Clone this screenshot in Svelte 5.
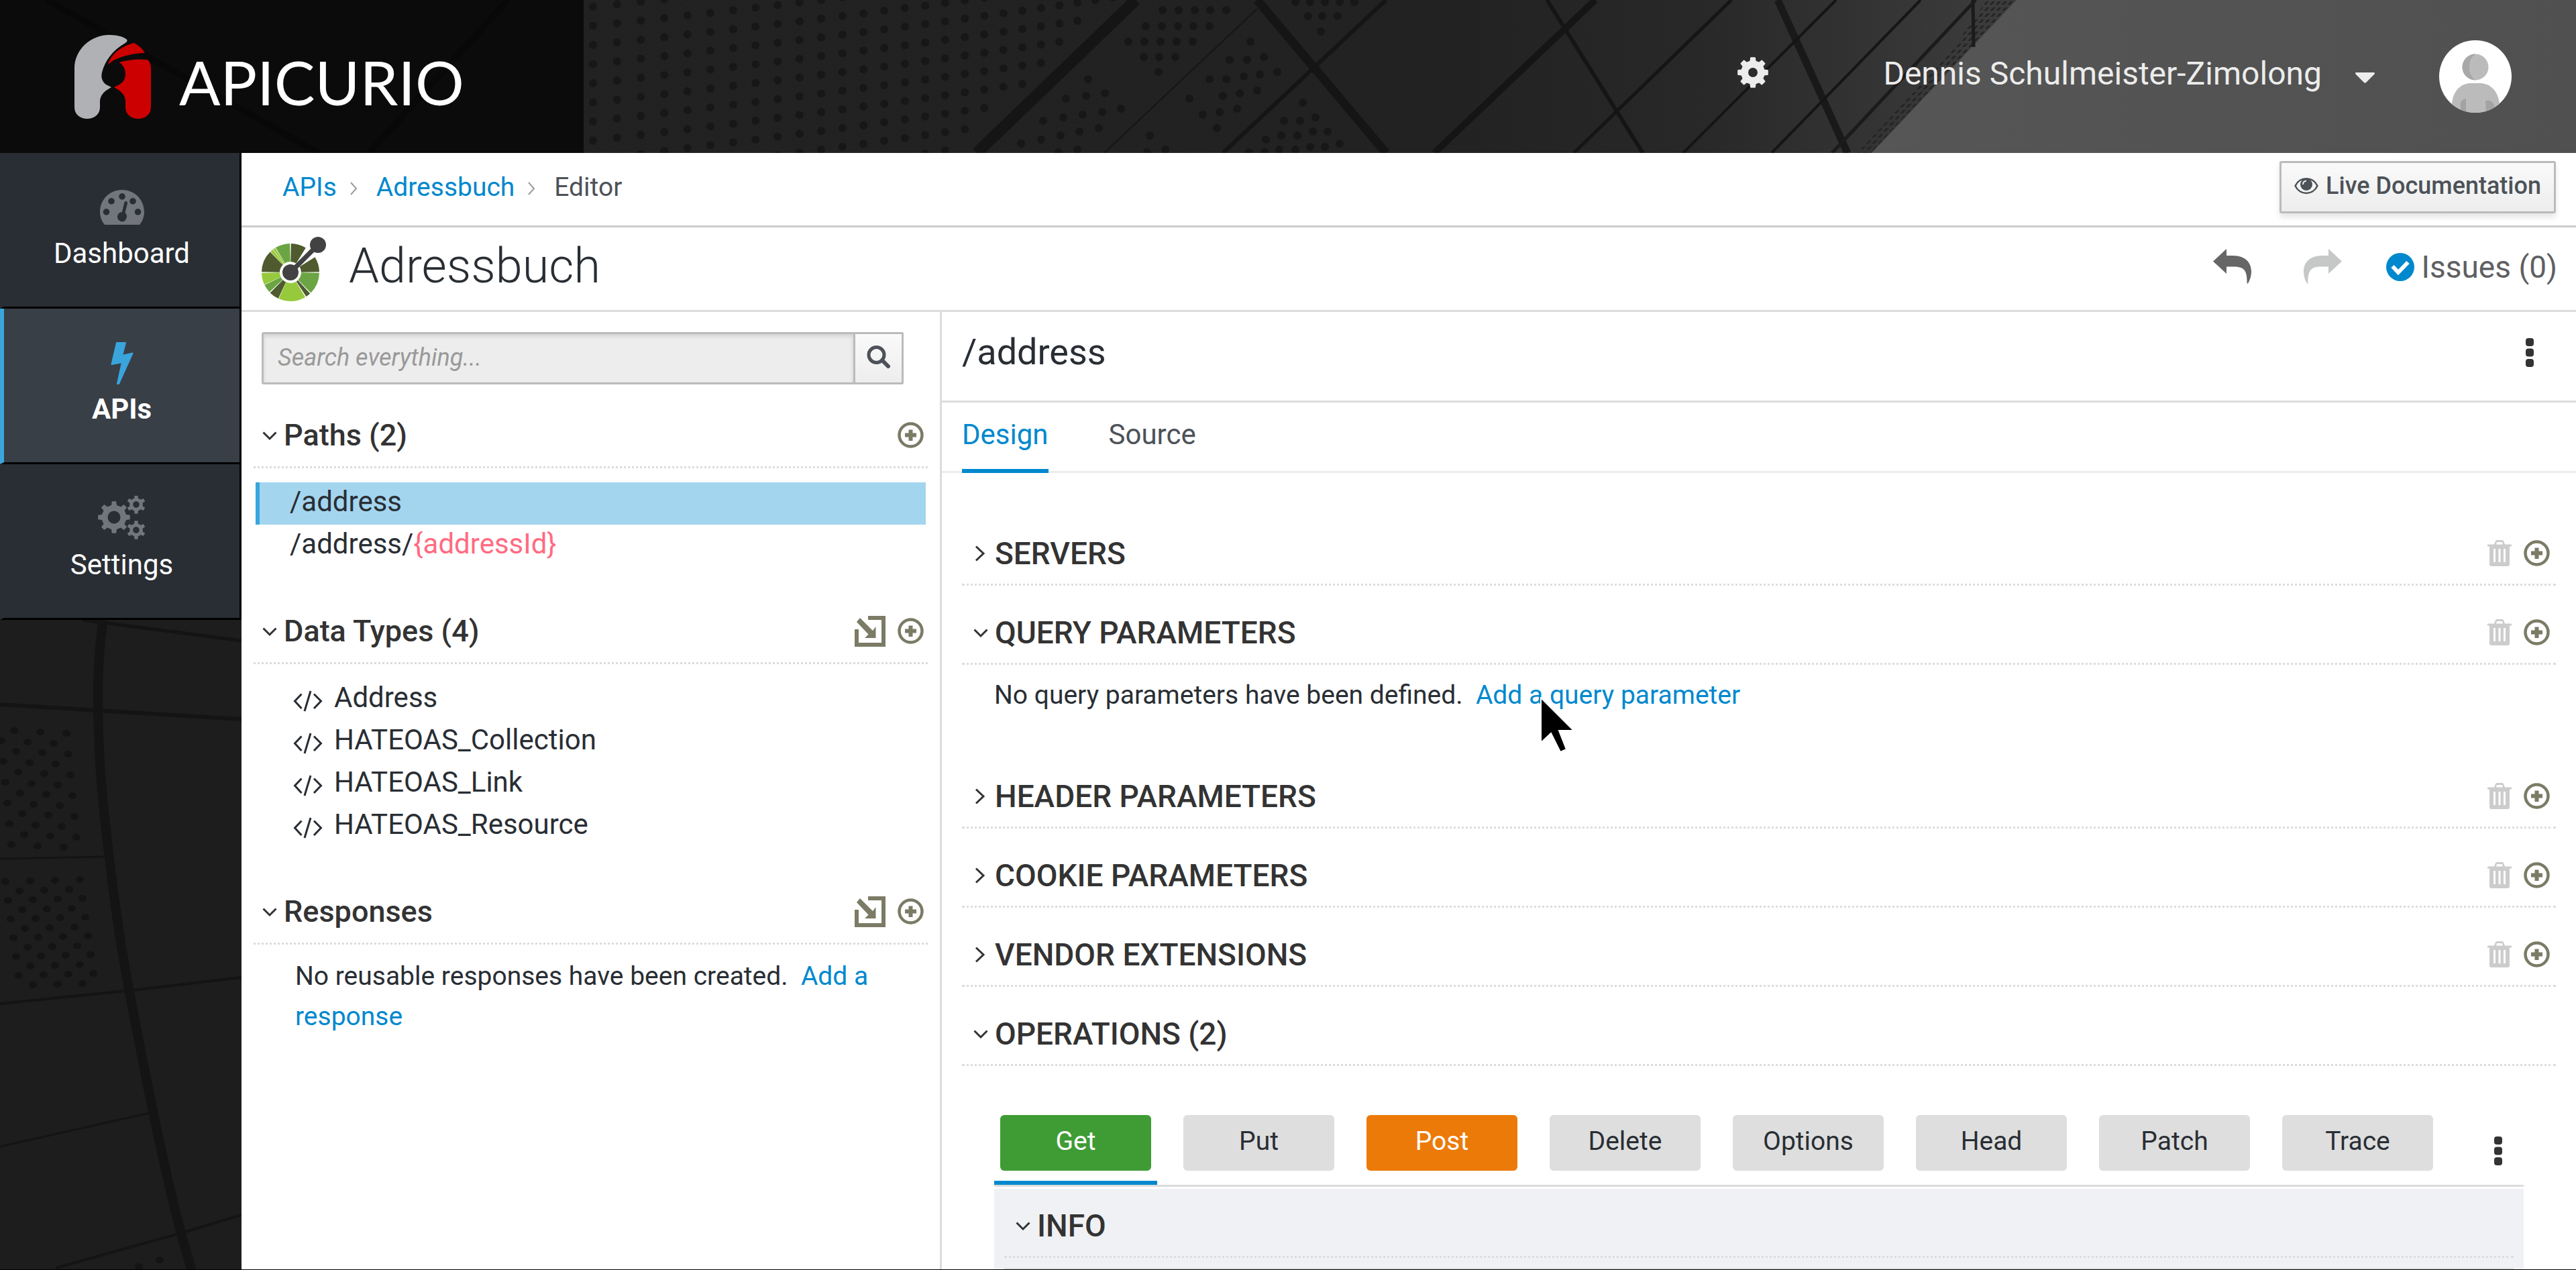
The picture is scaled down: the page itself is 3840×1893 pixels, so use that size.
<script lang="ts">
  type Point = [number, number];

  const nav = [
    { label: 'Dashboard', icon: 'dashboard', active: false },
    { label: 'APIs', icon: 'bolt', active: true },
    { label: 'Settings', icon: 'cogs', active: false },
  ];

  const dataTypes = ['Address', 'HATEOAS_Collection', 'HATEOAS_Link', 'HATEOAS_Resource'];

  const methods = [
    { name: 'Get', tone: 'get' },
    { name: 'Put', tone: '' },
    { name: 'Post', tone: 'post' },
    { name: 'Delete', tone: '' },
    { name: 'Options', tone: '' },
    { name: 'Head', tone: '' },
    { name: 'Patch', tone: '' },
    { name: 'Trace', tone: '' },
  ];

  let search = $state('');
  let tab = $state('Design');
  let method = $state('Get');

  // Outline of a toothed wheel with a round hole, for use with fill-rule evenodd.
  function gear(cx: number, cy: number, teeth: number, outer: number, inner: number, hole: number): string {
    const pts: string[] = [];
    const step = (Math.PI * 2) / teeth;
    for (let i = 0; i < teeth; i++) {
      const a = i * step - Math.PI / 2;
      const corners: Point[] = [
        [a - step * 0.27, inner],
        [a - step * 0.17, outer],
        [a + step * 0.17, outer],
        [a + step * 0.27, inner],
      ];
      for (const [t, r] of corners) pts.push(`${(cx + Math.cos(t) * r).toFixed(1)} ${(cy + Math.sin(t) * r).toFixed(1)}`);
    }
    return `M${pts.join('L')}ZM${cx - hole} ${cy}a${hole} ${hole} 0 1 0 ${hole * 2} 0a${hole} ${hole} 0 1 0 ${-hole * 2} 0Z`;
  }

  // Slice of the ring in the API logo; angles are in degrees, counter-clockwise from the right.
  function wedge(from: number, to: number): string {
    const at = (deg: number, r: number) => {
      const t = (deg * Math.PI) / 180;
      return `${(43 + Math.cos(t) * r).toFixed(1)} ${(53 - Math.sin(t) * r).toFixed(1)}`;
    };
    return `M${at(from, 16)}L${at(from, 43)}A43 43 0 0 0 ${at(to, 43)}L${at(to, 16)}A16 16 0 0 1 ${at(from, 16)}Z`;
  }

  const slices: [number, number, string][] = [
    [1, 32, '#4f5b2f'],
    [58, 89, '#4f5b2f'],
    [91, 121, '#6ba543'],
    [122, 127, '#97c93d'],
    [128, 134, '#97c93d'],
    [135, 179, '#4f5b2f'],
    [181, 205, '#97c93d'],
    [206, 223, '#6ba543'],
    [225, 245, '#4f5b2f'],
    [246, 301, '#97c93d'],
    [303, 313, '#4f5b2f'],
    [315, 359, '#6ba543'],
  ];

  // Perforated facade in the masthead.
  const facadeDots: Point[] = [];
  for (let i = 0; i < 26; i++) {
    for (let j = 0; j < 12; j++) {
      const x = 884 + 36 * i - 0.2 * i * i;
      const y = 10 + (28.5 - i * 0.06) * j - 3.8 * i;
      if (y > -6 && y < 234 && x < 1655 - 1.04 * y) facadeDots.push([x, y]);
    }
  }
  const patches: [number, number[]][] = [
    [3, [1931, 1953, 1975, 1997, 2019]],
    [15, [1733, 1757, 1781, 1804, 1828]],
    [24, [1950, 1971, 1994]],
    [39, [1708, 1732, 1756, 1779, 1803]],
    [47, [1969]],
    [62, [1682, 1706, 1730, 1754, 1778, 1864]],
    [85, [1705, 1728, 1752, 1884]],
    [89, [1833, 1859]],
    [107, [1727, 1904]],
    [111, [1878]],
    [114, [1854]],
    [118, [1622, 1803, 1828]],
    [135, [1874]],
    [139, [1647, 1848]],
    [143, [1619, 1823]],
    [147, [1589, 1773]],
    [153, [1942]],
    [162, [1671, 1844]],
    [167, [1643, 1818]],
    [171, [1614, 1793]],
    [175, [1585, 1961]],
    [180, [1555, 1914, 1938]],
    [191, [1638, 1814]],
    [196, [1609, 1957, 1979]],
    [202, [1581, 1714, 1910, 1934]],
    [208, [1552, 1887]],
    [214, [1522, 1997]],
    [219, [1953, 1975]],
    [223, [1606, 1737, 1907, 1931]],
    [227, [1578, 1710, 1862, 1885]],
  ];
  for (const [y, xs] of patches) for (const x of xs) facadeDots.push([x, y]);

  // Perforated panels at the foot of the navigation.
  const wallDots: Point[] = [];
  for (let k = 0; k < 6; k++) {
    for (let c = 0; c < 3; c++) {
      wallDots.push([21 + c * 39 + k * 3, 165 + c * 2 + k * 31]);
      wallDots.push([2 + c * 39 + k * 3, 180 + c * 2 + k * 31]);
    }
    for (let c = 0; c < 4; c++) {
      wallDots.push([8 + c * 37 + k * 4, 390 - c + k * 28]);
      if (c < 3) wallDots.push([29 + c * 37 + k * 4, 404 - c + k * 28]);
    }
  }
  wallDots.push([238, 954], [207, 964]);
</script>

{#snippet chevron(open: boolean)}
  <svg class="chevron" viewBox="0 0 22 24" aria-hidden="true">
    {#if open}
      <path d="M1.500 7.500L11 17L20.500 7.500" />
    {:else}
      <path d="M4 1.500L15 12L4 22.500" />
    {/if}
  </svg>
{/snippet}

{#snippet plus()}
  <button class="tool" aria-label="Add">
    <svg width="39" height="39" viewBox="0 0 39 39" fill="#7b7b66" aria-hidden="true">
      <circle cx="19.500" cy="19.500" r="17" fill="none" stroke="#7b7b66" stroke-width="4.500" />
      <path d="M16.500 11.500h6v5h5.500v6h-5.500v5.500h-6v-5.500h-5.500v-6h5.500z" />
    </svg>
  </button>
{/snippet}

{#snippet importer()}
  <button class="tool" aria-label="Import">
    <svg width="46" height="46" viewBox="0 0 46 46" fill="#7b7b66" aria-hidden="true">
      <path d="M20 0h26v46H0V20h6v20h34V6H20z" />
      <path d="M8 3L27 22L31.500 16V33H15L20.500 27.500L3 9z" />
    </svg>
  </button>
{/snippet}

{#snippet trash()}
  <button class="tool" aria-label="Delete all">
    <svg width="36" height="39" viewBox="0 0 36 39" aria-hidden="true">
      <path
        fill="#ccc"
        fill-rule="evenodd"
        d="M12 1.500Q12.500 0 14 0h8q1.500 0 2 1.500L26 6.500h9q1 0 1 1V9.500h-3V36q0 3-3 3H6q-3 0-3-3V9.500H0V7.500q0-1 1-1h9zM13 6.500h10l-1-3.500h-8zM9 13v20h3V13zM16.500 13v20h3V13zM24 13v20h3V13z"
      />
    </svg>
  </button>
{/snippet}

{#snippet kebab()}
  <svg width="12" height="43" viewBox="0 0 12 43" fill="#333" aria-hidden="true">
    <rect width="12" height="12" rx="4" />
    <rect y="15.500" width="12" height="12" rx="4" />
    <rect y="31" width="12" height="12" rx="4" />
  </svg>
{/snippet}

{#snippet sectionHead(title: string, open: boolean, tools: boolean)}
  <div class="head">
    <h3><button class="toggle" aria-expanded={open}>{@render chevron(open)}{title}</button></h3>
    {#if tools}
      <div class="tools">{@render trash()}{@render plus()}</div>
    {/if}
  </div>
{/snippet}

<div class="app">
  <header class="masthead">
    <svg class="backdrop" viewBox="0 0 3840 228" preserveAspectRatio="xMaxYMid slice" aria-hidden="true">
      <defs>
        <linearGradient id="facade" x1="0" x2="1" y1="0" y2="0">
          <stop offset="0" stop-color="#212121" />
          <stop offset="0.56" stop-color="#222" />
          <stop offset="0.66" stop-color="#282828" />
          <stop offset="0.77" stop-color="#3b3b3b" />
        </linearGradient>
        <linearGradient id="sky" x1="0" x2="1" y1="0" y2="0">
          <stop offset="0" stop-color="#565656" />
          <stop offset="1" stop-color="#505050" />
        </linearGradient>
        <pattern id="mesh" width="9" height="9" patternUnits="userSpaceOnUse" patternTransform="skewX(-43)">
          <rect x="2" y="2" width="4" height="5" fill="#252525" />
        </pattern>
      </defs>
      <rect width="3840" height="228" fill="url(#facade)" />
      <g fill="#171717">
        {#each facadeDots as [x, y]}
          <ellipse cx={x} cy={y} rx="6" ry="6" />
        {/each}
      </g>
      <path d="M3006 0H3840V228H2790Z" fill="url(#sky)" />
      <path d="M2962 0H3004L2788 228H2766L2920 60Z" fill="url(#mesh)" />
      <g fill="none" stroke="#151515">
        <path stroke-width="17" d="M1693 0L1456 228" />
        <path stroke-width="13" d="M1874 0L2066 228" />
        <path stroke-width="6" d="M2066 0L1823 228" />
        <path stroke-width="2" d="M1874 13L1646 228" />
        <path stroke-width="10" d="M2378 0L2138 228" />
        <path stroke-width="6" d="M2306 0L2449 228" />
        <path stroke-width="5" d="M2581 0L2346 228" />
        <path stroke-width="11" d="M2650 0L2754 228" stroke="#191919" />
        <path stroke-width="4" d="M2737 0L2509 228" />
        <path stroke-width="4" d="M2863 0L2641 228" />
        <path stroke-width="5" d="M2945 0L2731 228M2941 0L2942 70" stroke="#1b1b1b" />
      </g>
      <rect width="870" height="228" fill="#0b0b0b" />
      <path stroke="#080808" stroke-width="9" fill="none" d="M70 0L475 228M757 0L550 228" />
    </svg>
    <div class="bar">
      <a class="brand" href="#home">
        <svg width="114" height="125" viewBox="0 0 114 125" aria-hidden="true">
          <path
            fill="#afb1b4"
            d="M0 50C0 22 24 0 52 0C64 0 74 3 78 7Q80 9 76 12C56 23 45 40 41 56C39 64 42 70 47 74L55 78L47 83Q39 89 38 98V108C38 118 30 125 19 125C8 125 0 118 0 108Z"
          />
          <path fill="#c00" d="M50 44C54 30 68 17 89 12Q100 18 105 27C86 27 68 33 58 38Z" />
          <path
            fill="#c00"
            d="M67 41Q86 35 109 37Q114 41 114 50V108C114 118 106 125 95 125C84 125 76 118 76 108V98Q75 89 67 83L59 78L67 74Q76 69 76 58Q76 48 67 41Z"
          />
        </svg>
        <span>APICURIO</span>
      </a>
      <button class="cog" aria-label="Configuration">
        <svg width="48" height="48" viewBox="0 0 48 48" aria-hidden="true">
          <path fill="#ececec" stroke="#ececec" stroke-width="2" stroke-linejoin="round" fill-rule="evenodd" d={gear(24, 24, 8, 22, 17, 8)} />
        </svg>
      </button>
      <button class="user">
        Dennis Schulmeister-Zimolong
        <svg width="29" height="16" viewBox="0 0 29 16" aria-hidden="true"><path d="M1 0H28Q30 1 28 3L16 15Q14.500 16.500 13 15L1 3Q-1 1 1 0Z" fill="#ececec" /></svg>
      </button>
      <svg class="avatar" width="108" height="108" viewBox="0 0 108 108" role="img" aria-label="Dennis Schulmeister-Zimolong">
        <defs><clipPath id="face"><circle cx="54" cy="54" r="54" /></clipPath></defs>
        <circle cx="54" cy="54" r="54" fill="#fff" />
        <g clip-path="url(#face)">
          <ellipse cx="54" cy="40" rx="19.500" ry="19.500" fill="#bbb" />
          <path d="M54 20.500A19.500 19.500 0 0 0 54 59.500Q44 52 45 38Q46 26 54 20.500Z" fill="#a8a8a8" />
          <path d="M19 108V94C21 74 33 65 46 64H62C76 65 87 74 90 94V108Z" fill="#bbb" />
          <path d="M32 108V92Q36 87 40 87V108ZM70 108L69 90Q77 88 82 96V108Z" fill="#a3a3a3" />
        </g>
      </svg>
    </div>
  </header>

  <div class="body">
    <nav class="side" aria-label="Main">
      {#each nav as item}
        <a class="nav-item" class:active={item.active} href="#{item.label}" aria-current={item.active ? 'page' : undefined}>
          <svg width="72" height="68" viewBox="0 0 72 68" aria-hidden="true">
            {#if item.icon === 'dashboard'}
              <path
                fill="#72767b"
                fill-rule="evenodd"
                d="M10 60Q3 52 3 41C3 23 17 8 36 8S69 23 69 41Q69 52 62 60H10ZM36 13a4.800 4.800 0 1 0 .1 0ZM20 20a4.800 4.800 0 1 0 .1 0ZM52 20a4.800 4.800 0 1 0 .1 0ZM12.500 36a4.800 4.800 0 1 0 .1 0ZM59.500 36a4.800 4.800 0 1 0 .1 0ZM39.500 26.500Q40.500 24.500 42.500 25.200T44 28L40.500 42Q44 45 42.500 50T36 55.500Q29 54 29 48T36 41Z"
              />
            {:else if item.icon === 'bolt'}
              <path fill="#39a5dc" stroke="#39a5dc" stroke-width="2" stroke-linejoin="round" d="M28 4H41L36 23L51.500 19.500L31 65H29L36 33L20.500 36Z" />
            {:else}
              <g fill="#72767b" fill-rule="evenodd">
                <path d={gear(24, 32, 8, 24, 18.5, 9.5)} />
                <path d={gear(57, 13, 6, 14, 10, 4.8)} />
                <path d={gear(57, 51, 6, 14, 10, 4.8)} />
              </g>
            {/if}
          </svg>
          <span>{item.label}</span>
        </a>
      {/each}
      <svg class="wall" viewBox="0 0 360 969" preserveAspectRatio="xMinYMin slice" aria-hidden="true">
        <rect width="360" height="969" fill="#1d1d1d" />
        <g fill="#141414">
          {#each wallDots as [x, y]}
            <ellipse cx={x} cy={y} rx="6" ry="5" />
          {/each}
        </g>
        <g fill="none" stroke="#141414">
          <path stroke-width="14" d="M154 0C144 60 145 140 149 212S172 440 187 522S250 860 286 969" />
          <path stroke-width="5" d="M123 0L360 31" />
          <path stroke-width="6" d="M0 126L147 135L360 148" />
          <path stroke-width="3" d="M0 356L155 353" />
          <path stroke-width="4" d="M0 572L197 552L360 533" />
          <path stroke-width="3" d="M0 785L222 735" />
          <path stroke-width="4" d="M83 966L273 913L360 887" />
        </g>
      </svg>
    </nav>

    <main class="content">
      <div class="crumb-row">
        <nav class="crumbs" aria-label="Breadcrumb">
          <a href="#apis">APIs</a>
          <svg width="12" height="20" viewBox="0 0 12 20" aria-hidden="true"><path d="M2 1L10 10L2 19" fill="none" stroke="#9c9c9c" stroke-width="2" /></svg>
          <a href="#adressbuch">Adressbuch</a>
          <svg width="12" height="20" viewBox="0 0 12 20" aria-hidden="true"><path d="M2 1L10 10L2 19" fill="none" stroke="#9c9c9c" stroke-width="2" /></svg>
          <span>Editor</span>
        </nav>
        <button class="live">
          <svg width="36" height="26" viewBox="0 0 36 26" aria-hidden="true">
            <path fill="none" stroke="#4d5258" stroke-width="2.500" d="M1.500 13C8-1.500 28-1.500 34.500 13C28 27.500 8 27.500 1.500 13Z" />
            <circle cx="18" cy="11" r="9" fill="#4d5258" />
            <path d="M13 11Q13 6 18 5.500" fill="none" stroke="#eee" stroke-width="2" />
          </svg>
          Live Documentation
        </button>
      </div>

      <div class="title-row">
        <svg class="api-logo" width="96" height="96" viewBox="0 0 96 96" aria-hidden="true">
          {#each slices as [from, to, color]}
            <path d={wedge(from, to)} fill={color} />
          {/each}
          <g fill="#424242">
            <circle cx="43" cy="53" r="12" />
            <circle cx="84" cy="12" r="12" />
            <path d="M43 53L84 12" stroke="#424242" stroke-width="7" />
          </g>
        </svg>
        <h1>Adressbuch</h1>
        <div class="actions">
          <button class="undo" aria-label="Undo">
            <svg width="57" height="52" viewBox="0 0 57 52" aria-hidden="true"><path fill="#666" d="M0 18.500L20 0V10H29C50 10 57 22 57 34Q57 43 52 51.500H50.500C51 33 47 26.500 31 26.500H20V37Z" /></svg>
          </button>
          <button class="redo" aria-label="Redo">
            <svg width="57" height="52" viewBox="0 0 57 52" aria-hidden="true"><path fill="#c6c8c8" d="M57 18.500L37 0V10H28C7 10 0 22 0 34Q0 43 5 51.500H6.500C6 33 10 26.500 26 26.500H37V37Z" /></svg>
          </button>
          <button class="issues">
            <svg width="42" height="42" viewBox="0 0 42 42" aria-hidden="true"><circle cx="21" cy="21" r="21" fill="#0088ce" /><path d="M9.500 20L18 29L32.500 14" fill="none" stroke="#fff" stroke-width="6" /></svg>
            Issues (0)
          </button>
        </div>
      </div>

      <div class="panes">
        <aside class="outline">
          <form class="search" role="search">
            <input type="text" aria-label="Search everything" placeholder="Search everything..." bind:value={search} />
            <button type="button" aria-label="Search">
              <svg width="36" height="34" viewBox="0 0 36 34" fill="none" stroke="#4d5258" aria-hidden="true">
                <circle cx="14.500" cy="14" r="11.500" stroke-width="5" />
                <path d="M23 22L32 31" stroke-width="6" stroke-linecap="round" />
              </svg>
            </button>
          </form>

          <section>
            <div class="head">
              <h2><button class="toggle" aria-expanded="true">{@render chevron(true)}Paths (2)</button></h2>
              <div class="tools">{@render plus()}</div>
            </div>
            <ul>
              <li><a class="row selected" href="#address">/address</a></li>
              <li><a class="row" href="#addressId">/address/<span class="param">{'{addressId}'}</span></a></li>
            </ul>
          </section>

          <section>
            <div class="head">
              <h2><button class="toggle" aria-expanded="true">{@render chevron(true)}Data Types (4)</button></h2>
              <div class="tools">{@render importer()}{@render plus()}</div>
            </div>
            <ul>
              {#each dataTypes as name}
                <li>
                  <a class="row typed" href="#{name}">
                    <svg width="44" height="32" viewBox="0 0 44 32" fill="none" stroke="#292e34" stroke-width="3" aria-hidden="true">
                      <path d="M12.500 5.500L2.500 16L12.500 27M31 5.500L41.500 16L31 27M26 1L17 31" />
                    </svg>
                    {name}
                  </a>
                </li>
              {/each}
            </ul>
          </section>

          <section>
            <div class="head">
              <h2><button class="toggle" aria-expanded="true">{@render chevron(true)}Responses</button></h2>
              <div class="tools">{@render importer()}{@render plus()}</div>
            </div>
            <p class="empty">No reusable responses have been created. &nbsp;<a href="#add-response">Add a response</a></p>
          </section>
        </aside>

        <section class="editor">
          <div class="path-bar">
            <h2>/address</h2>
            <button class="menu" aria-label="Path actions">{@render kebab()}</button>
          </div>

          <div class="tabs" role="tablist">
            {#each ['Design', 'Source'] as name}
              <button role="tab" aria-selected={tab === name} class:current={tab === name} onclick={() => (tab = name)}>{name}</button>
            {/each}
          </div>

          <div class="sections">
            <section>{@render sectionHead('SERVERS', false, true)}</section>
            <section>
              {@render sectionHead('QUERY PARAMETERS', true, true)}
              <p class="none">
                No query parameters have been defined. &nbsp;<a class="add" href="#add-query"
                  >Add a query parameter<svg class="pointer" width="54" height="84" viewBox="0 0 54 84" aria-hidden="true">
                    <path d="M2 1V68L17 54L31 82L40 78L29 50H51Z" stroke="#fff" stroke-width="2" />
                  </svg></a
                >
              </p>
            </section>
            <section>{@render sectionHead('HEADER PARAMETERS', false, true)}</section>
            <section>{@render sectionHead('COOKIE PARAMETERS', false, true)}</section>
            <section>{@render sectionHead('VENDOR EXTENSIONS', false, true)}</section>
            <section>
              {@render sectionHead('OPERATIONS (2)', true, false)}
              <div class="operations">
                <div class="methods" role="tablist">
                  {#each methods as m}
                    <div class="method" class:current={method === m.name}>
                      <button role="tab" aria-selected={method === m.name} class={m.tone} onclick={() => (method = m.name)}>{m.name}</button>
                    </div>
                  {/each}
                  <button class="menu" aria-label="Operation actions">{@render kebab()}</button>
                </div>
                <div class="operation">
                  <section>{@render sectionHead('INFO', true, false)}</section>
                  <div class="details"></div>
                </div>
              </div>
            </section>
          </div>
        </section>
      </div>
    </main>
  </div>
</div>

<style>
  :global(body) {
    margin: 0;
    background: #fff;
  }

  .app {
    display: flex;
    flex-direction: column;
    height: 100vh;
    box-sizing: border-box;
    border-bottom: 1px solid #000;
    overflow: hidden;
    font-family: Roboto, 'Noto Sans', sans-serif;
    font-size: 39px;
    line-height: 60px;
    color: #292e34;
  }

  .app :global(*) {
    box-sizing: border-box;
  }

  button {
    font: inherit;
    color: inherit;
    background: none;
    border: 0;
    padding: 0;
    cursor: pointer;
  }

  a {
    color: #0088ce;
    text-decoration: none;
  }

  svg {
    display: block;
    flex: none;
  }

  h1,
  h2,
  h3,
  p,
  ul {
    margin: 0;
    padding: 0;
    font-weight: 400;
  }

  ul {
    list-style: none;
  }

  .masthead {
    display: grid;
    flex: none;
    height: 228px;
    background: #222;
  }

  .masthead > * {
    grid-area: 1 / 1;
    min-width: 0;
  }

  .backdrop {
    width: 100%;
    height: 228px;
  }

  .bar {
    display: flex;
    align-items: center;
    padding: 0 96px 0 111px;
    color: #ececec;
    z-index: 1;
  }

  .brand {
    display: flex;
    align-items: center;
    gap: 42px;
    margin-right: auto;
    color: #fff;
    font-family: Lato, sans-serif;
    font-size: 91px;
    line-height: 120px;
  }

  .brand span {
    padding-top: 16px;
  }

  .cog {
    margin: 0 170px 12px 0;
  }

  .user {
    display: flex;
    align-items: center;
    gap: 50px;
    margin: 0 96px 8px 0;
    font-size: 48px;
  }

  .user svg {
    margin-top: 12px;
  }

  .body {
    display: flex;
    flex: 1;
    min-height: 0;
  }

  .side {
    display: flex;
    flex: none;
    flex-direction: column;
    width: 360px;
    background: #1d1d1d;
  }

  .nav-item {
    display: flex;
    flex: none;
    flex-direction: column;
    align-items: center;
    height: 232px;
    padding-top: 47px;
    background: #292e34;
    border: 3px solid #000;
    border-top: 0;
    border-left: 6px solid #292e34;
    color: #fff;
    font-size: 42px;
    line-height: 70px;
  }

  .nav-item.active {
    background: #393f47;
    border-left-color: #39a5dc;
    font-weight: 700;
  }

  .wall {
    flex: 1;
    width: 100%;
    min-height: 0;
  }

  .content {
    display: flex;
    flex: 1;
    flex-direction: column;
    min-width: 0;
    background: #fff;
  }

  .crumb-row {
    display: flex;
    flex: none;
    align-items: center;
    justify-content: space-between;
    height: 111px;
    padding: 0 30px 6px 61px;
    border-bottom: 3px solid #ccc;
  }

  .crumbs {
    display: flex;
    align-items: center;
    color: #4d5258;
  }

  .crumbs svg {
    margin: 4px 28px 0 19px;
  }

  .live {
    display: flex;
    align-items: center;
    gap: 11px;
    height: 78px;
    padding: 0 19px 4px;
    background: linear-gradient(#fafafa, #ededed);
    border: 3px solid #bbb;
    border-radius: 3px;
    box-shadow: 0 6px 9px rgba(3, 3, 3, 0.1);
    color: #4d5258;
    font-size: 36px;
    font-weight: 500;
  }

  .title-row {
    display: flex;
    flex: none;
    align-items: center;
    height: 126px;
    padding: 0 28px 0 30px;
    border-bottom: 3px solid #dcdcdc;
  }

  h1 {
    padding: 0 0 8px 34px;
    font-size: 72px;
    font-weight: 300;
    line-height: 90px;
  }

  .actions {
    display: flex;
    align-items: center;
    margin: 0 0 6px auto;
  }

  .undo,
  .redo {
    padding-bottom: 2px;
  }

  .redo {
    margin: 0 66px 0 78px;
  }

  .issues {
    display: flex;
    align-items: center;
    gap: 10px;
    color: #5e6063;
    font-size: 46px;
  }

  .panes {
    display: flex;
    flex: 1;
    min-height: 0;
  }

  .outline {
    flex: none;
    width: 30%;
    padding: 30px 18px 0;
    border-right: 3px solid #dcdcdc;
    overflow: hidden;
  }

  .search {
    display: flex;
    height: 78px;
    margin: 0 36px 35px 12px;
  }

  .search input {
    flex: 1;
    min-width: 0;
    padding: 0 21px 2px;
    background: #ededed;
    border: 3px solid #bbb;
    border-radius: 3px 0 0 3px;
    box-shadow: inset 0 3px 6px rgba(3, 3, 3, 0.12);
    font: 36px Roboto, sans-serif;
    color: #292e34;
  }

  .search input::placeholder {
    color: #999;
    font-style: italic;
    opacity: 1;
  }

  .search button {
    display: grid;
    place-items: center;
    width: 72px;
    padding-bottom: 4px;
    background: linear-gradient(#fafafa, #ededed);
    border: 3px solid #bbb;
    border-left: 0;
    border-radius: 0 3px 3px 0;
  }

  .head {
    display: flex;
    align-items: center;
    justify-content: space-between;
    height: 90px;
    padding: 0 6px 6px 13px;
    border-bottom: 3px dotted #dcdcdc;
    color: #333;
  }

  .toggle {
    display: flex;
    align-items: center;
    gap: 10px;
    font-size: 45px;
    font-weight: 500;
  }

  .chevron {
    width: 22px;
    height: 24px;
    fill: none;
    stroke: #333;
    stroke-width: 3px;
  }

  .tools {
    display: flex;
    align-items: center;
    gap: 18px;
  }

  .outline ul {
    padding: 21px 3px 55px;
  }

  .row {
    display: flex;
    align-items: center;
    height: 63px;
    padding: 0 0 6px 45px;
    border-left: 6px solid transparent;
    color: #292e34;
    font-size: 42px;
    line-height: 57px;
  }

  .row.selected {
    background: #a3d5ef;
    border-left-color: #39a5dc;
  }

  .row.typed {
    gap: 17px;
    padding-left: 50px;
  }

  .typed svg {
    margin-top: 10px;
  }

  .param {
    color: #ff6b81;
  }

  .empty {
    padding: 17px 60px 0 62px;
  }

  .editor {
    flex: 1;
    min-width: 0;
    overflow: hidden;
  }

  .path-bar {
    display: flex;
    align-items: center;
    justify-content: space-between;
    height: 135px;
    padding: 0 63px 12px 30px;
    border-bottom: 3px solid #dcdcdc;
  }

  .path-bar h2 {
    font-size: 54px;
  }

  .tabs {
    display: flex;
    gap: 90px;
    height: 105px;
    padding-left: 30px;
    box-shadow: inset 0 -3px #ededed;
    color: #4d5258;
    font-size: 42px;
  }

  .tabs button {
    padding-bottom: 4px;
    border-bottom: 6px solid transparent;
  }

  .tabs .current {
    border-color: #0088ce;
    color: #0088ce;
  }

  .sections {
    display: flex;
    flex-direction: column;
    gap: 28px;
    padding: 78px 30px 0;
  }

  .editor .head {
    padding: 0 9px 4px 17px;
  }

  .editor .toggle {
    font-size: 46px;
  }

  .none {
    padding: 15px 48px 51px;
  }

  .add {
    position: relative;
  }

  .pointer {
    position: absolute;
    top: 26px;
    left: 95px;
  }

  .operations {
    padding: 73px 48px 0;
  }

  .methods {
    display: flex;
    gap: 30px;
    border-bottom: 3px solid #dcdcdc;
  }

  .method {
    padding: 0 9px 15px;
    border-bottom: 6px solid transparent;
  }

  .method.current {
    border-color: #0088ce;
  }

  .method button {
    width: 225px;
    height: 83px;
    padding-bottom: 6px;
    background: #dedede;
    border-radius: 6px;
  }

  .method .get {
    background: #3f9c35;
    color: #fff;
  }

  .method .post {
    background: #ec7a08;
    color: #fff;
  }

  .methods .menu {
    margin-left: auto;
    padding: 2px 32px 0 0;
  }

  .operation {
    margin-top: 3px;
    padding: 13px 15px 0;
    background: #f0f1f4;
  }

  .details {
    height: 60px;
    margin-top: 15px;
    background: #dcdcdc;
  }
</style>
